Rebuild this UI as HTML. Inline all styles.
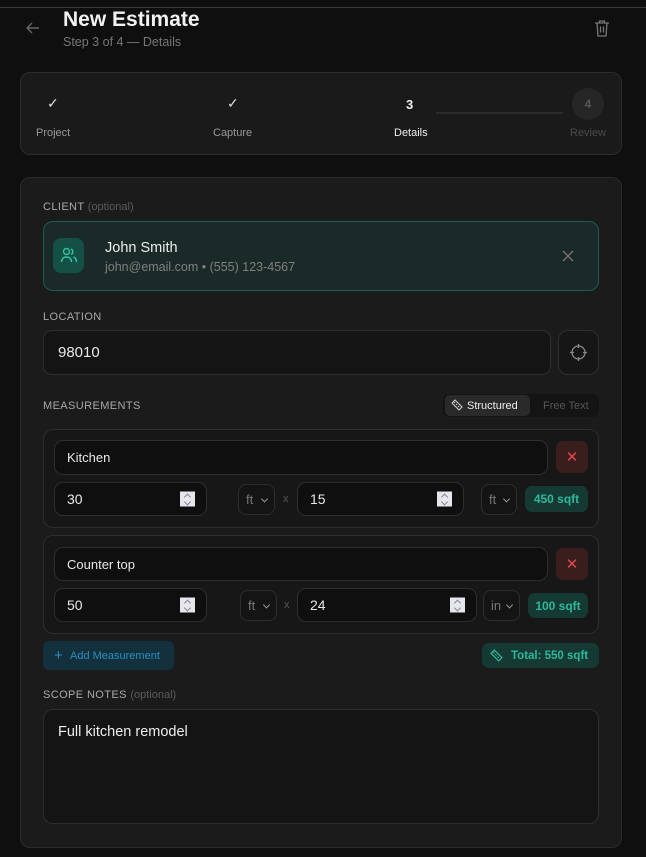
<!DOCTYPE html>
<html><head><meta charset="utf-8"><style>
*{box-sizing:border-box;margin:0;padding:0}
body{width:646px;height:857px;background:#0f0f0f;font-family:"Liberation Sans",sans-serif;position:relative;overflow:hidden;color:#eee}
.a{position:absolute}
.lbl{font-size:11px;color:#a8a8a8;letter-spacing:.4px}
.lbl span{color:#5a5a5a;letter-spacing:0}
.inp{position:absolute;background:#0f0f0f;border:1px solid #2e2e2e;border-radius:9px;font-size:14px;color:#e8e8e8;padding-left:12px;display:flex;align-items:center}
.sel{position:absolute;border:1px solid #2e2e2e;border-radius:8px;font-size:13px;color:#777;padding-left:7px;display:flex;align-items:center;background:#141414}
.sel i{position:absolute;right:7px;top:50%;width:5px;height:5px;border-right:1.3px solid #999;border-bottom:1.3px solid #999;transform:translateY(-70%) rotate(45deg)}
.spin{position:absolute;right:11px;top:50%;transform:translateY(-50%);width:15px;height:15px;background:#e6e6ee}
.spin:before{content:"";position:absolute;left:5px;top:3px;width:4px;height:4px;border-left:1px solid #888;border-top:1px solid #888;transform:rotate(45deg)}
.spin:after{content:"";position:absolute;left:5px;top:8px;width:4px;height:4px;border-right:1px solid #888;border-bottom:1px solid #888;transform:rotate(45deg)}
.del{position:absolute;background:#3a1d1d;border-radius:7px;color:#e04a4a;font-size:15px;display:flex;align-items:center;justify-content:center}
.badge{position:absolute;background:#153a33;border-radius:7px;color:#2fb79c;font-size:12px;font-weight:bold;display:flex;align-items:center;justify-content:center}
.card{position:absolute;background:#171717;border:1px solid #2e2e2e;border-radius:10px}
</style></head><body>
<div class="a" style="left:0;top:7px;width:646px;height:1px;background:#3a3a3a"></div>
<svg class="a" style="left:25px;top:20px" width="16" height="16" viewBox="0 0 16 16" fill="none" stroke="#666" stroke-width="1.4"><path d="M14 8H2M7 3L2 8l5 5"/></svg>
<div class="a" style="left:63px;top:8px;font-size:21px;font-weight:bold;color:#f2f2f2">New Estimate</div>
<div class="a" style="left:63px;top:35px;font-size:12.5px;color:#777">Step 3 of 4 — Details</div>
<svg class="a" style="left:594px;top:19px" width="16" height="18" viewBox="0 0 16 18" fill="none" stroke="#777" stroke-width="1.3"><path d="M1 4h14M5.5 4V2h5v2M3 4l1 13h8l1-13M6.5 7.5v6M9.5 7.5v6"/></svg>

<div class="a" style="left:20px;top:72px;width:602px;height:83px;background:#1a1a1a;border:1px solid #2c2c2c;border-radius:10px"></div>
<div class="a" style="left:47px;top:95px;font-size:14px;color:#ddd">✓</div>
<div class="a" style="left:227px;top:95px;font-size:14px;color:#ddd">✓</div>
<div class="a" style="left:36px;top:127px;font-size:11px;color:#999">Project</div>
<div class="a" style="left:213px;top:127px;font-size:11px;color:#999">Capture</div>
<div class="a" style="left:406px;top:97px;font-size:13px;font-weight:bold;color:#eee">3</div>
<div class="a" style="left:394px;top:127px;font-size:11px;color:#eee">Details</div>
<div class="a" style="left:436px;top:112px;width:127px;height:2px;background:#2a2a2a"></div>
<div class="a" style="left:572px;top:88px;width:32px;height:32px;border-radius:50%;background:#262626;color:#555;font-size:12px;font-weight:bold;display:flex;align-items:center;justify-content:center">4</div>
<div class="a" style="left:570px;top:127px;font-size:11px;color:#4a4a4a">Review</div>

<div class="a" style="left:20px;top:177px;width:602px;height:671px;background:#1b1b1b;border:1px solid #2c2c2c;border-radius:10px"></div>
<div class="a lbl" style="left:43px;top:201px">CLIENT <span>(optional)</span></div>
<div class="a" style="left:43px;top:221px;width:556px;height:70px;background:#1a2a28;border:1px solid #1d5a50;border-radius:10px"></div>
<div class="a" style="left:53px;top:238px;width:31px;height:35px;background:#145046;border-radius:8px"></div>
<svg class="a" style="left:60px;top:246px" width="18" height="18" viewBox="0 0 18 18" fill="none" stroke="#2fc4a5" stroke-width="1.4"><circle cx="6.5" cy="5.5" r="3"/><path d="M1.5 16c0-3 2-5 5-5s5 2 5 5M11 3a3 3 0 010 5.5M13.5 11c1.8.6 3 2.5 3 5"/></svg>
<div class="a" style="left:105px;top:240px;font-size:14.5px;color:#eee">John Smith</div>
<div class="a" style="left:105px;top:260px;font-size:12.5px;color:#7f7f7f">john@email.com • (555) 123-4567</div>
<svg class="a" style="left:562px;top:250px" width="12" height="12" viewBox="0 0 12 12" stroke="#777" stroke-width="1.3"><path d="M1 1l10 10M11 1L1 11"/></svg>

<div class="a lbl" style="left:43px;top:311px">LOCATION</div>
<div class="inp" style="left:43px;top:330px;width:508px;height:45px;background:#141414;padding-left:14px;font-size:15px">98010</div>
<div class="a" style="left:558px;top:330px;width:41px;height:45px;border:1px solid #2e2e2e;border-radius:10px;background:#161616"></div>
<svg class="a" style="left:570px;top:344px" width="17" height="17" viewBox="0 0 17 17" fill="none" stroke="#888" stroke-width="1.3"><circle cx="8.5" cy="8.5" r="6.5"/><path d="M8.5 0v4M8.5 13v4M0 8.5h4M13 8.5h4"/></svg>

<div class="a lbl" style="left:43px;top:400px">MEASUREMENTS</div>
<div class="a" style="left:443px;top:394px;width:156px;height:23px;background:#141414;border-radius:6px"></div>
<div class="a" style="left:445px;top:395px;width:85px;height:21px;background:#2a2a2a;border-radius:5px;font-size:11px;color:#eee;display:flex;align-items:center;padding-left:22px">Structured</div>
<svg class="a" style="left:451px;top:399px" width="12" height="12" viewBox="0 0 12 12" fill="none" stroke="#ccc" stroke-width="1.1"><path d="M1 4l3-3 7 7-3 3z M3 3l1 1M5 5l1 1M7 7l1 1"/></svg>
<div class="a" style="left:543px;top:400px;font-size:11px;color:#555">Free Text</div>

<div class="card" style="left:43px;top:429px;width:556px;height:99px"></div>
<div class="inp" style="left:54px;top:440px;width:494px;height:35px;font-size:13px">Kitchen</div>
<div class="del" style="left:556px;top:441px;width:32px;height:32px">✕</div>
<div class="inp" style="left:54px;top:482px;width:153px;height:34px">30<div class="spin"></div></div>
<div class="sel" style="left:238px;top:484px;width:37px;height:31px">ft<i></i></div>
<div class="a" style="left:283px;top:493px;font-size:11px;color:#555">x</div>
<div class="inp" style="left:297px;top:482px;width:167px;height:34px">15<div class="spin"></div></div>
<div class="sel" style="left:481px;top:484px;width:36px;height:31px">ft<i></i></div>
<div class="badge" style="left:525px;top:486px;width:63px;height:26px">450 sqft</div>

<div class="card" style="left:43px;top:535px;width:556px;height:99px"></div>
<div class="inp" style="left:54px;top:547px;width:494px;height:34px;font-size:13px">Counter top</div>
<div class="del" style="left:556px;top:548px;width:32px;height:32px">✕</div>
<div class="inp" style="left:54px;top:588px;width:153px;height:34px">50<div class="spin"></div></div>
<div class="sel" style="left:240px;top:590px;width:37px;height:31px">ft<i></i></div>
<div class="a" style="left:284px;top:599px;font-size:11px;color:#555">x</div>
<div class="inp" style="left:297px;top:588px;width:180px;height:34px">24<div class="spin"></div></div>
<div class="sel" style="left:483px;top:590px;width:37px;height:31px">in<i></i></div>
<div class="badge" style="left:528px;top:593px;width:60px;height:25px">100 sqft</div>

<div class="a" style="left:43px;top:641px;width:131px;height:29px;background:#13303d;border-radius:6px;color:#2a8fc0;font-size:11px;display:flex;align-items:center;padding-left:27px">Add Measurement</div>
<div class="a" style="left:54px;top:648px;font-size:15px;color:#2a8fc0;line-height:15px">+</div>
<div class="badge" style="left:482px;top:643px;width:117px;height:25px;justify-content:flex-start;padding-left:29px;font-size:11.5px">Total: 550 sqft</div>
<svg class="a" style="left:490px;top:649px" width="13" height="13" viewBox="0 0 12 12" fill="none" stroke="#2fb79c" stroke-width="1.1"><path d="M1 4l3-3 7 7-3 3z M3 3l1 1M5 5l1 1M7 7l1 1"/></svg>

<div class="a lbl" style="left:43px;top:689px">SCOPE NOTES <span>(optional)</span></div>
<div class="a" style="left:43px;top:709px;width:556px;height:115px;background:#141414;border:1px solid #2e2e2e;border-radius:10px"></div>
<div class="a" style="left:58px;top:724px;font-size:14.5px;color:#eee">Full kitchen remodel</div>
</body></html>
